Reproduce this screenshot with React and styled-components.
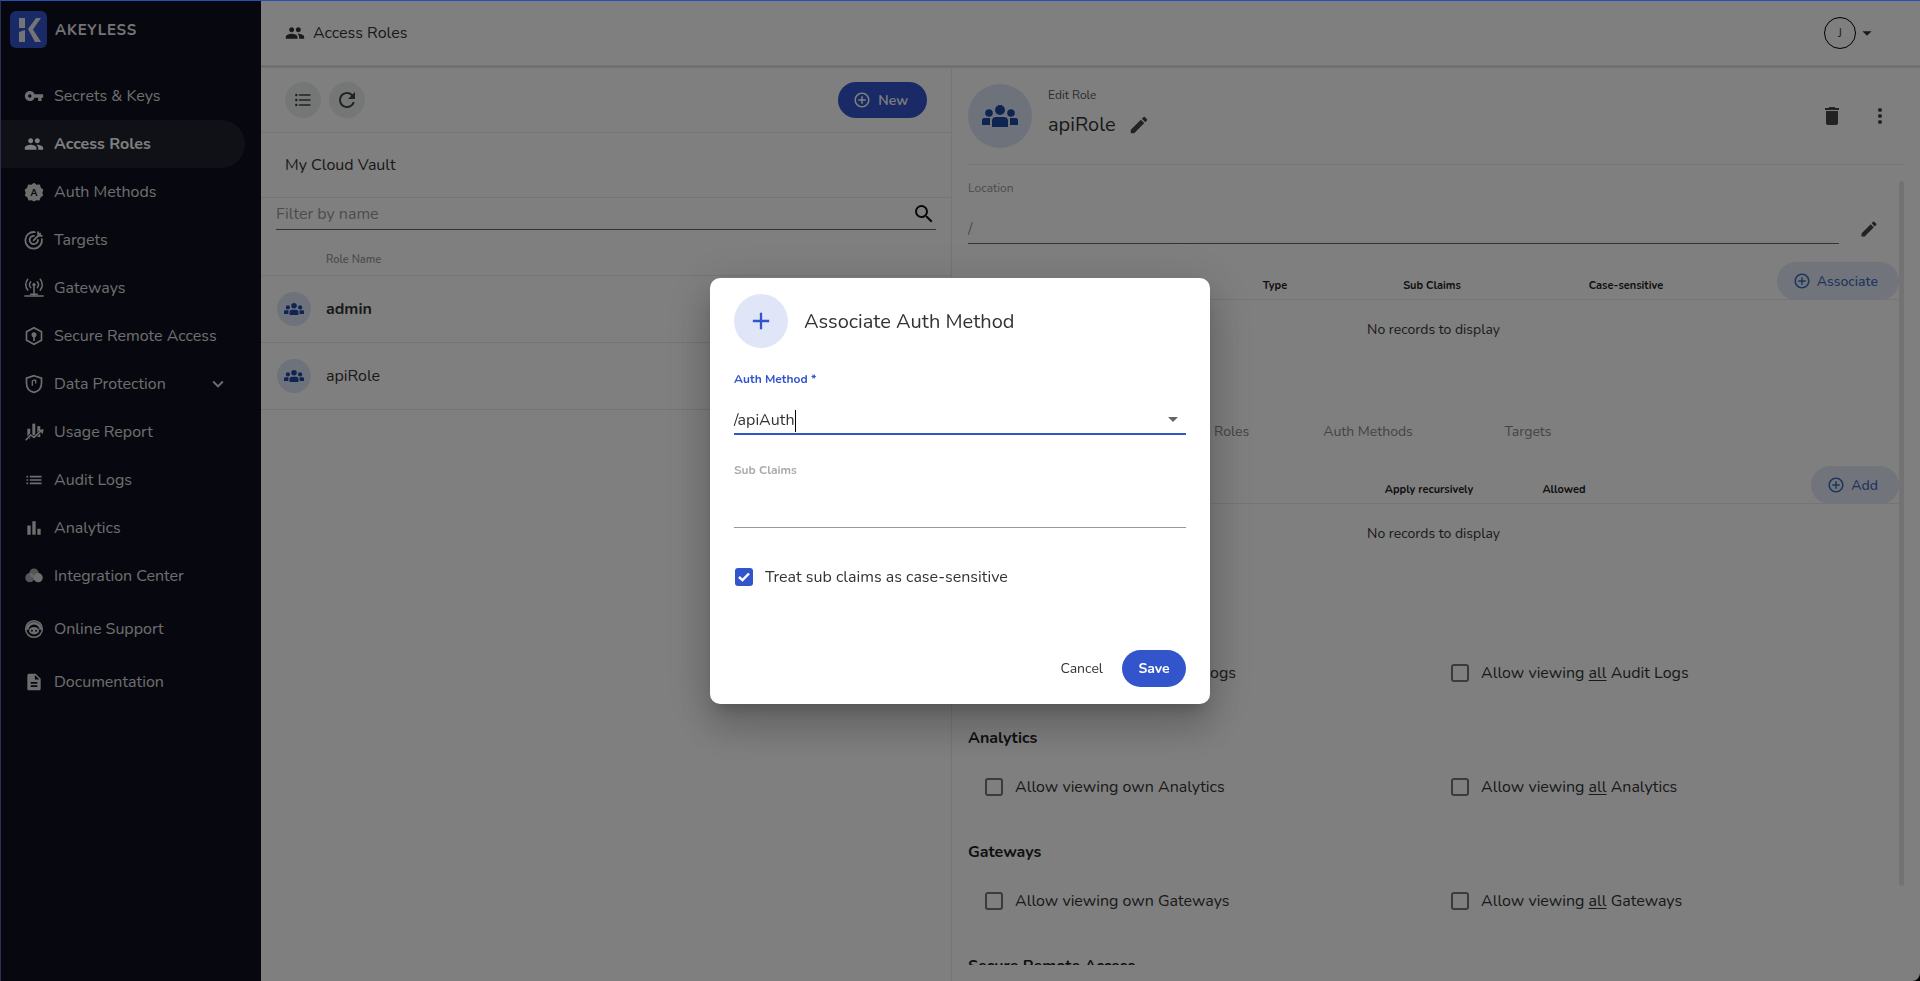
import React from "react";
import styled, { createGlobalStyle } from "styled-components";
import {
  MdVpnKey, MdPeople, MdFormatListBulleted, MdRefresh, MdSearch, MdEdit, MdDelete, MdMoreVert,
  MdAddCircleOutline, MdExpandMore, MdBarChart, MdDescription, MdArrowDropDown, MdAdd, MdList,
} from "react-icons/md";

const FONT = `"Nunito", "Lato", "Noto Sans", sans-serif`;

const Global = createGlobalStyle`
  * { box-sizing: border-box; }
  html, body { margin: 0; padding: 0; height: 100%; overflow: hidden; }
  body { font-family: ${FONT}; color: #333; background: #000; }
`;

const Frame = styled.div`
  height: 100vh;
  display: flex;
  background: #fff;
  border-top: 1px solid #2450b8;
  border-left: 1px solid #2a3050;
  border-bottom-right-radius: 8px;
  overflow: hidden;
`;

/* sidebar */
const Sidebar = styled.aside`
  width: 260px;
  flex: none;
  background: #0e101e;
  display: flex;
  flex-direction: column;
`;

const Brand = styled.div`
  height: 71px;
  flex: none;
  display: flex;
  align-items: flex-start;
  padding: 10px 0 0 9px;
  gap: 8px;
`;

const BrandMark = styled.div`
  width: 37px;
  height: 37px;
  border-radius: 6px;
  background: #3355cc;
  display: flex;
  align-items: center;
  justify-content: center;
`;

const BrandName = styled.span`
  font-size: 15px;
  font-weight: 700;
  letter-spacing: 0.75px;
  color: #e8e8e8;
  margin-top: 9px;
`;

const NavItem = styled.div`
  height: 48px;
  flex: none;
  width: 244px;
  margin-top: ${p => (p.$spaced ? "5px" : "0")};
  display: flex;
  align-items: center;
  padding: 0 16px 0 23px;
  border-radius: 0 24px 24px 0;
  color: ${p => (p.$active ? "#fff" : "#ddd")};
  font-size: 16px;
  font-weight: ${p => (p.$active ? 700 : 400)};
  background: ${p => (p.$active ? "#20222e" : "transparent")};
`;

const NavIcon = styled.span`
  width: 30px;
  height: 24px;
  flex: none;
  display: flex;
  align-items: center;
  svg { width: 20px; height: 20px; }
`;

const NavLabel = styled.span`
  flex: 1;
  white-space: nowrap;
`;

/* main */
const Main = styled.main`
  flex: 1;
  min-width: 0;
  display: flex;
  flex-direction: column;
`;

const TopBar = styled.header`
  height: 67px;
  flex: none;
  display: flex;
  align-items: center;
  justify-content: space-between;
  padding: 0 42px 0 24px;
  border-bottom: 3px solid #e2e2e2;
`;

const PageTitle = styled.div`
  display: flex;
  align-items: center;
  gap: 8px;
  font-size: 16px;
`;

const UserMenu = styled.div`
  display: flex;
  align-items: center;
`;

const UserBadge = styled.div`
  width: 32px;
  height: 32px;
  border: 1px solid #000;
  border-radius: 50%;
  display: flex;
  align-items: center;
  justify-content: center;
  font-size: 12px;
`;

const Panes = styled.div`
  flex: 1;
  min-height: 0;
  display: flex;
`;

const ListPane = styled.section`
  width: 691px;
  flex: none;
  border-right: 1px solid #ebebeb;
`;

const ListToolbar = styled.div`
  height: 65px;
  display: flex;
  align-items: center;
  gap: 8px;
  padding: 0 24px;
  border-bottom: 1px solid #ebebeb;
`;

const RoundButton = styled.div`
  width: 36px;
  height: 36px;
  border-radius: 50%;
  background: #ebefed;
  display: flex;
  align-items: center;
  justify-content: center;
  color: #444;
`;

const PillButton = styled.div`
  height: ${p => (p.$soft ? "38px" : "36px")};
  padding: ${p => (p.$soft ? "0 21px 0 16px" : "0 19px 0 15px")};
  border-radius: 19px;
  display: flex;
  align-items: center;
  gap: ${p => (p.$soft ? "6px" : "7px")};
  font-size: 14px;
  font-weight: ${p => (p.$soft ? 500 : 600)};
  color: ${p => (p.$soft ? "#3b6bb8" : "#fff")};
  background: ${p => (p.$soft ? "#e3e8f5" : "#3355cc")};
  margin-left: ${p => (p.$push ? "auto" : "0")};
`;

const VaultRow = styled.div`
  height: 65px;
  padding-left: 24px;
  display: flex;
  align-items: center;
  font-size: 16px;
  border-bottom: 1px solid #ebebeb;
`;

const FilterRow = styled.div`
  height: 32px;
  margin: 0 15px;
  display: flex;
  align-items: center;
  justify-content: space-between;
  border-bottom: 1px solid #666;
  font-size: 16px;
  color: #999;
  svg { color: #111; }
`;

const ColumnHead = styled.div`
  height: 46px;
  padding: 14px 0 0 65px;
  display: flex;
  align-items: center;
  font-size: 11px;
  font-weight: 600;
  color: #999;
  border-bottom: 1px solid #ebebeb;
`;

const RoleRow = styled.div`
  height: 67px;
  padding-left: 16px;
  display: flex;
  align-items: center;
  gap: 15px;
  font-size: 16px;
  font-weight: ${p => (p.$bold ? 700 : 400)};
  border-bottom: 1px solid #e6e6ee;
`;

const RoleAvatar = styled.div`
  width: ${p => (p.$large ? "64px" : "34px")};
  height: ${p => (p.$large ? "64px" : "34px")};
  border-radius: 50%;
  flex: none;
  background: #dce4f5;
  color: #2148a8;
  display: flex;
  align-items: center;
  justify-content: center;
`;

const DetailPane = styled.section`
  flex: 1;
  min-width: 0;
  padding: 0 16px 16px 16px;
  position: relative;
  display: flex;
  flex-direction: column;
`;

const DetailHead = styled.div`
  height: 97px;
  flex: none;
  padding-top: 16px;
  display: flex;
  align-items: flex-start;
  gap: 16px;
  border-bottom: 1px solid #ebebeb;
`;

const DetailTitle = styled.div`
  flex: 1;
  padding-top: 3px;
`;

const SmallCaption = styled.div`
  font-size: 12px;
  color: #555;
`;

const NameRow = styled.div`
  display: flex;
  align-items: center;
  gap: 12px;
  font-size: 20px;
  margin-top: 8px;
  svg { color: #444; }
`;

const HeadActions = styled.div`
  display: flex;
  gap: 24px;
  padding: 20px 12px 0 0;
  color: #444;
`;

const ScrollArea = styled.div`
  flex: 1;
  min-height: 0;
  overflow: hidden;
  padding-right: 5px;
`;

const LocationBlock = styled.div`
  padding-top: 15px;
`;

const FieldLabel = styled.div`
  font-size: 12px;
  color: #999;
  height: 15px;
`;

const LocationRow = styled.div`
  display: flex;
  align-items: center;
  gap: 20px;
  margin-top: 18px;
  svg { color: #444; }
`;

const LocationInput = styled.div`
  width: 871px;
  height: 31px;
  padding-top: 5px;
  border-bottom: 1px solid #666;
  font-size: 16px;
  color: #999;
`;

const TableBar = styled.div`
  height: ${p => p.$h};
  position: relative;
  display: grid;
  grid-template-columns: ${p => p.$cols};
  align-items: end;
  padding-bottom: 6px;
  font-size: 11px;
  font-weight: 700;
  color: #222;
  border-bottom: 1px solid #ebebeb;
`;

const ColLabel = styled.span`
  text-align: ${p => p.$align || "center"};
`;

const BarButton = styled.div`
  position: absolute;
  right: 0;
  top: ${p => p.$top};
`;

const EmptyNote = styled.div`
  height: ${p => p.$h};
  padding-top: 20px;
  text-align: center;
  font-size: 14px;
`;

const Tabs = styled.div`
  display: flex;
  align-items: center;
  height: 24px;
  font-size: 14px;
  color: #888;
`;

const TabLabel = styled.span`
  width: 160px;
  text-align: center;
`;

const PermGroup = styled.div`
  height: 114px;
`;

const PermTitle = styled.div`
  font-size: 16px;
  font-weight: 700;
  color: #222;
  height: 24px;
  display: flex;
  align-items: center;
`;

const PermRow = styled.div`
  display: grid;
  grid-template-columns: 466px 1fr;
  padding-left: 17px;
  margin-top: 25px;
`;

const CheckLine = styled.label`
  display: flex;
  align-items: center;
  gap: 12px;
  font-size: 16px;
  height: 24px;
  color: #333;
  u { text-underline-offset: 2px; }
`;

const CheckBox = styled.span`
  width: 18px;
  height: 18px;
  border-radius: 3px;
  flex: none;
  border: 2px solid ${p => (p.$on ? "#3355cc" : "#777")};
  background: ${p => (p.$on ? "#3355cc" : "transparent")};
  color: #fff;
  display: flex;
  align-items: center;
  justify-content: center;
`;

const ScrollThumb = styled.div`
  position: absolute;
  right: 16px;
  top: 113px;
  width: 5px;
  height: 705px;
  border-radius: 3px;
  background: #e6e6e6;
`;

/* modal */
const Backdrop = styled.div`
  position: fixed;
  inset: 1px 0 0 1px;
  background: rgba(0, 0, 0, 0.5);
  display: flex;
  align-items: center;
  justify-content: center;
`;

const Dialog = styled.div`
  width: 500px;
  height: 426px;
  background: #fff;
  border-radius: 10px;
  padding: 16px 24px 17px;
  display: flex;
  flex-direction: column;
  box-shadow: 0 11px 15px -7px rgba(0,0,0,.2), 0 24px 38px 3px rgba(0,0,0,.14), 0 9px 46px 8px rgba(0,0,0,.12);
  margin-right: 1px;
`;

const DialogHead = styled.div`
  display: flex;
  align-items: center;
  gap: 16px;
  font-size: 20px;
  color: #333;
`;

const PlusCircle = styled.div`
  width: 54px;
  height: 54px;
  border-radius: 50%;
  background: #e0e6f7;
  color: #3355cc;
  display: flex;
  align-items: center;
  justify-content: center;
`;

const Field = styled.div`
  margin-top: ${p => p.$top};
`;

const Label = styled.div`
  font-size: 12px;
  font-weight: 700;
  height: 16px;
  color: ${p => (p.$focus ? "#3355cc" : "#aaa")};
`;

const InputLine = styled.div`
  height: ${p => p.$h};
  display: flex;
  align-items: flex-end;
  justify-content: space-between;
  padding-bottom: 1px;
  font-size: 16px;
  color: #333;
  border-bottom: ${p => (p.$focus ? "2px solid #3355cc" : "1px solid #999")};
  svg { color: #666; margin: 0 1px 1px 0; }
`;

const Caret = styled.span`
  display: inline-block;
  width: 1px;
  height: 22px;
  background: #000;
  vertical-align: middle;
`;

const CheckIndent = styled.div`
  padding-left: 1px;
`;

const Actions = styled.div`
  margin-top: auto;
  display: flex;
  justify-content: flex-end;
  align-items: center;
  gap: 19px;
  font-size: 14px;
`;

const SaveButton = styled.div`
  width: 64px;
  height: 37px;
  border-radius: 19px;
  background: #3355cc;
  color: #fff;
  font-weight: 700;
  display: flex;
  align-items: center;
  justify-content: center;
`;

const glyph = { fill: "currentColor", viewBox: "0 0 24 24" };

const LogoK = () => (
  <svg width="26" height="26" viewBox="0 0 26 26" fill="#e8e8e8">
    <path d="M3 1h6v10H3zM3 15l6-2v12H3zM12 12 20 1h5l-8 11.500L25 25h-6z" />
  </svg>
);

const GroupIcon = ({ w }) => (
  <svg width={w} viewBox="0 0 36 22" fill="currentColor">
    <circle cx="18" cy="5" r="5" />
    <circle cx="7" cy="8" r="3.800" />
    <circle cx="29" cy="8" r="3.800" />
    <path d="M10 15a4 4 0 0 1 4-3h8a4 4 0 0 1 4 3v7H10zM0 15a2 2 0 0 1 2-2h6v7H0zM28 13h6a2 2 0 0 1 2 2v5h-8z" />
  </svg>
);

const BadgeIcon = () => (
  <svg {...glyph}>
    <path d="M12 1l3.200 2.300 3.900-.3 1.100 3.800 3.100 2.400L22 13l1 3.300-3.200 2.200-1.100 3.700-3.800-.2L12 23.500 9.100 22l-3.800.2-1.100-3.700L1 16.300 2 13 .7 9.200l3.100-2.400L4.900 3l3.900.3z" />
    <text x="12" y="16.500" fontSize="12" fontWeight="700" textAnchor="middle" fill="#0e101e" fontFamily="Lato, sans-serif">A</text>
  </svg>
);

const TargetIcon = () => (
  <svg viewBox="0 0 24 24" fill="none" stroke="currentColor" strokeWidth="2.200" strokeLinecap="round">
    <path d="M21.500 11A10 10 0 1 1 13 2.500" />
    <path d="M16.800 12a5 5 0 1 1-4.800-5" />
    <path d="M11.500 12.500l8-8M17 2.500V7h4.500" />
  </svg>
);

const GatewayIcon = () => (
  <svg viewBox="0 0 24 24" fill="none" stroke="currentColor" strokeWidth="1.800" strokeLinecap="round">
    <circle cx="12" cy="8" r="2" fill="currentColor" stroke="none" />
    <path d="M12 8v12M1 21.500h22M8 4.500a5.500 5.500 0 0 0 0 7M16 4.500a5.500 5.500 0 0 1 0 7M4.500 1.500a10 10 0 0 0 0 13M19.500 1.500a10 10 0 0 1 0 13M8 19.500h8" />
  </svg>
);

const RemoteIcon = () => (
  <svg viewBox="0 0 24 24" fill="none" stroke="currentColor" strokeWidth="2">
    <path d="M12 2l9 5v10l-9 5-9-5V7z" />
    <circle cx="12" cy="10.500" r="2" fill="currentColor" />
    <path d="M12 12v6" />
  </svg>
);

const ShieldIcon = () => (
  <svg viewBox="0 0 24 24" fill="none" stroke="currentColor" strokeWidth="2">
    <path d="M12 2l9 3v6c0 5.500-3.800 9.700-9 11-5.200-1.300-9-5.500-9-11V5z" />
    <path d="M10 8v6M14 7v4.500M10 8l4-1" strokeWidth="1.600" />
  </svg>
);

const UsageIcon = () => (
  <svg viewBox="0 0 24 24" fill="currentColor">
    <rect x="4" y="8" width="3.500" height="12" />
    <rect x="10" y="2" width="3.500" height="17" />
    <rect x="16" y="5" width="3.500" height="13" />
    <path d="M2 22l6-6.500 4 3 8-7.500" fill="none" stroke="#0e101e" strokeWidth="3.400" />
    <path d="M2 22l6-6.500 4 3 8-7.500" fill="none" stroke="currentColor" strokeWidth="1.800" />
    <path d="M23.500 8.500l-1 6-5-5z" />
  </svg>
);

const ClusterIcon = () => (
  <svg {...glyph}>
    <circle cx="12" cy="8.500" r="5.500" opacity=".75" />
    <circle cx="7" cy="14" r="5.500" opacity=".75" />
    <circle cx="17" cy="14" r="5.500" />
  </svg>
);

const SupportIcon = () => (
  <svg viewBox="0 0 24 24" fill="none" stroke="currentColor" strokeWidth="1.800">
    <circle cx="12" cy="12" r="10" />
    <path d="M4 13a8 8 0 0 1 16 0" strokeWidth="3" />
    <ellipse cx="12" cy="14" rx="6" ry="4.500" fill="currentColor" stroke="none" />
    <circle cx="9.500" cy="14" r="1.200" fill="#0e101e" stroke="none" />
    <circle cx="14.500" cy="14" r="1.200" fill="#0e101e" stroke="none" />
  </svg>
);

const CheckMark = () => (
  <svg width="12" height="10" viewBox="0 0 12 10" fill="none" stroke="#fff" strokeWidth="2.400">
    <path d="M1 5l3.500 3.200L11 1.500" />
  </svg>
);

const NAV = [
  { label: "Secrets & Keys", icon: <MdVpnKey /> },
  { label: "Access Roles", icon: <MdPeople />, active: true },
  { label: "Auth Methods", icon: <BadgeIcon /> },
  { label: "Targets", icon: <TargetIcon /> },
  { label: "Gateways", icon: <GatewayIcon /> },
  { label: "Secure Remote Access", icon: <RemoteIcon /> },
  { label: "Data Protection", icon: <ShieldIcon />, more: true },
  { label: "Usage Report", icon: <UsageIcon /> },
  { label: "Audit Logs", icon: <MdList /> },
  { label: "Analytics", icon: <MdBarChart /> },
  { label: "Integration Center", icon: <ClusterIcon /> },
  { label: "Online Support", icon: <SupportIcon />, spaced: true },
  { label: "Documentation", icon: <MdDescription />, spaced: true },
];

const PERMS = ["Audit Logs", "Analytics", "Gateways"];

export default function App() {
  return (
    <>
      <Global />
      <Frame>
        <Sidebar>
          <Brand>
            <BrandMark><LogoK /></BrandMark>
            <BrandName>AKEYLESS</BrandName>
          </Brand>
          {NAV.map(n => (
            <NavItem key={n.label} $active={n.active} $spaced={n.spaced}>
              <NavIcon>{n.icon}</NavIcon>
              <NavLabel>{n.label}</NavLabel>
              {n.more && <MdExpandMore size={22} />}
            </NavItem>
          ))}
        </Sidebar>
        <Main>
          <TopBar>
            <PageTitle><MdPeople size={20} />Access Roles</PageTitle>
            <UserMenu>
              <UserBadge>J</UserBadge>
              <MdArrowDropDown size={22} color="#333" />
            </UserMenu>
          </TopBar>
          <Panes>
            <ListPane>
              <ListToolbar>
                <RoundButton><MdFormatListBulleted size={20} /></RoundButton>
                <RoundButton><MdRefresh size={24} /></RoundButton>
                <PillButton $push><MdAddCircleOutline size={18} />New</PillButton>
              </ListToolbar>
              <VaultRow>My Cloud Vault</VaultRow>
              <FilterRow>Filter by name<MdSearch size={24} /></FilterRow>
              <ColumnHead>Role Name</ColumnHead>
              <RoleRow $bold><RoleAvatar><GroupIcon w={20} /></RoleAvatar>admin</RoleRow>
              <RoleRow><RoleAvatar><GroupIcon w={20} /></RoleAvatar>apiRole</RoleRow>
            </ListPane>
            <DetailPane>
              <DetailHead>
                <RoleAvatar $large><GroupIcon w={36} /></RoleAvatar>
                <DetailTitle>
                  <SmallCaption>Edit Role</SmallCaption>
                  <NameRow>apiRole<MdEdit size={22} /></NameRow>
                </DetailTitle>
                <HeadActions><MdDelete size={24} /><MdMoreVert size={24} /></HeadActions>
              </DetailHead>
              <ScrollArea>
                <LocationBlock>
                  <FieldLabel>Location</FieldLabel>
                  <LocationRow>
                    <LocationInput>/</LocationInput>
                    <MdEdit size={20} />
                  </LocationRow>
                </LocationBlock>
                <TableBar $h="56px" $cols="244px 126px 188px 200px">
                  <ColLabel>Auth Method</ColLabel>
                  <ColLabel>Type</ColLabel>
                  <ColLabel>Sub Claims</ColLabel>
                  <ColLabel>Case-sensitive</ColLabel>
                  <BarButton $top="18px">
                    <PillButton $soft><MdAddCircleOutline size={18} />Associate</PillButton>
                  </BarButton>
                </TableBar>
                <EmptyNote $h="119px">No records to display</EmptyNote>
                <Tabs>
                  <TabLabel>Items</TabLabel>
                  <TabLabel>Access Roles</TabLabel>
                  <TabLabel>Auth Methods</TabLabel>
                  <TabLabel>Targets</TabLabel>
                </Tabs>
                <TableBar $h="61px" $cols="400px 122px 148px">
                  <ColLabel $align="left">Path</ColLabel>
                  <ColLabel>Apply recursively</ColLabel>
                  <ColLabel>Allowed</ColLabel>
                  <BarButton $top="23px">
                    <PillButton $soft><MdAddCircleOutline size={18} />Add</PillButton>
                  </BarButton>
                </TableBar>
                <EmptyNote $h="108px">No records to display</EmptyNote>
                {PERMS.map(p => (
                  <PermGroup key={p}>
                    <PermTitle>{p}</PermTitle>
                    <PermRow>
                      <CheckLine><CheckBox /><span>Allow viewing own {p}</span></CheckLine>
                      <CheckLine><CheckBox /><span>Allow viewing <u>all</u> {p}</span></CheckLine>
                    </PermRow>
                  </PermGroup>
                ))}
                <PermTitle>Secure Remote Access</PermTitle>
              </ScrollArea>
              <ScrollThumb />
            </DetailPane>
          </Panes>
        </Main>
      </Frame>
      <Backdrop>
        <Dialog>
          <DialogHead>
            <PlusCircle><MdAdd size={28} /></PlusCircle>
            Associate Auth Method
          </DialogHead>
          <Field $top="23px">
            <Label $focus>Auth Method *</Label>
            <InputLine $focus $h="48px">
              <span>/apiAuth<Caret /></span>
              <MdArrowDropDown size={24} />
            </InputLine>
          </Field>
          <Field $top="27px">
            <Label>Sub Claims</Label>
            <InputLine $h="50px" />
          </Field>
          <Field $top="37px">
            <CheckIndent>
              <CheckLine>
                <CheckBox $on><CheckMark /></CheckBox>
                Treat sub claims as case-sensitive
              </CheckLine>
            </CheckIndent>
          </Field>
          <Actions>
            <span>Cancel</span>
            <SaveButton>Save</SaveButton>
          </Actions>
        </Dialog>
      </Backdrop>
    </>
  );
}
